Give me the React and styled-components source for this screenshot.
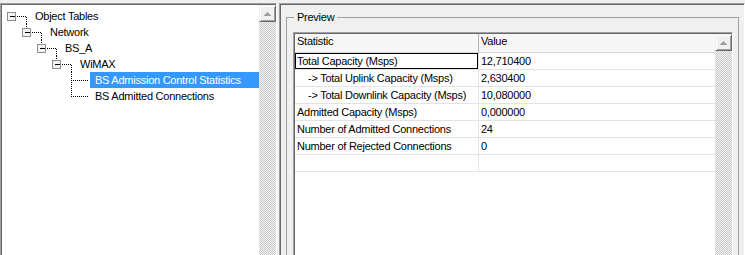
import React from 'react';
import styled, { createGlobalStyle } from 'styled-components';

const GlobalStyle = createGlobalStyle`
  body {
    margin: 0;
    background: #f0f0f0;
  }
`;

const Window = styled.div`
  display: flex;
  gap: 2px;
  width: 745px;
  height: 255px;
  box-sizing: border-box;
  padding-top: 3px;
  overflow: hidden;
  background: #f0f0f0;
  font-family: 'Liberation Sans', Arial, sans-serif;
  font-size: 11px;
  letter-spacing: -0.25px;
  color: #000;
`;

const Pane = styled.div`
  display: flex;
  flex: ${({ $grow }) => ($grow ? 1 : 'none')};
  width: ${({ $width }) => ($width ? `${$width}px` : 'auto')};
  height: 262px;
  box-sizing: border-box;
  border: 1px solid;
  border-color: #a0a0a0 #fff #fff #a0a0a0;
  box-shadow: inset 1px 1px 0 #696969;
  padding: ${({ $pad }) => $pad || '1px 0 0 1px'};
`;

/* tree */

const TreeList = styled.div`
  flex: 1;
  background: #fff;
  padding-top: 3px;
`;

const TreeRow = styled.div`
  display: flex;
  height: 16px;
`;

const Gutter = styled.svg`
  flex: none;
  display: block;
`;

const NodeLabel = styled.span`
  flex: ${({ $selected }) => ($selected ? 1 : 'none')};
  padding-left: 5px;
  line-height: 16px;
  white-space: nowrap;
  background: ${({ $selected }) => ($selected ? '#3399ff' : 'transparent')};
  color: ${({ $selected }) => ($selected ? '#fff' : '#000')};
`;

const dots = { stroke: '#000', strokeWidth: 1, strokeDasharray: '1 1', shapeRendering: 'crispEdges' };

const Branch = ({ level, leaf, last }) => {
  const cx = 9 + level * 15;
  const w = 28 + level * 15;
  return (
    <Gutter width={w} height={16}>
      {leaf ? (
        <>
          <line x1={cx + 0.5} y1={0} x2={cx + 0.5} y2={last ? 9 : 16} style={dots} />
          <line x1={cx + 2} y1={8.5} x2={cx + 18} y2={8.5} style={dots} />
        </>
      ) : (
        <>
          {level > 0 && <line x1={cx + 0.5} y1={0} x2={cx + 0.5} y2={4} style={dots} />}
          <rect x={cx - 3.5} y={4.5} width={8} height={8} fill="#f4f4f4" stroke="#8e8f8f" shapeRendering="crispEdges" />
          <line x1={cx - 1.5} y1={8.5} x2={cx + 3.5} y2={8.5} stroke="#000" shapeRendering="crispEdges" />
          <line x1={cx + 6} y1={8.5} x2={cx + 16} y2={8.5} style={dots} />
          <line x1={cx + 15.5} y1={9} x2={cx + 15.5} y2={16} style={dots} />
        </>
      )}
    </Gutter>
  );
};

/* scrollbars */

const ScrollBar = styled.div`
  display: flex;
  flex-direction: column;
  flex: none;
  width: 17px;
`;

const ScrollButton = styled.div`
  display: flex;
  align-items: center;
  justify-content: center;
  height: 17px;
  box-sizing: border-box;
  background: #f0f0f0;
  border: 1px solid;
  border-color: #f0f0f0 #696969 #696969 #f0f0f0;
  box-shadow: inset 1px 1px 0 #fff, inset -1px -1px 0 #a0a0a0;
`;

const Track = styled.div`
  flex: 1;
  background-color: #f4f4f4;
  background-image: repeating-conic-gradient(#c9c9c9 0% 25%, #f4f4f4 0% 50%);
  background-size: 2px 2px;
`;

const UpArrow = () => (
  <svg width="7" height="4" viewBox="0 0 7 4">
    <path d="M3.5 0 L7 4 L0 4 Z" fill="#a0a0a0" shapeRendering="crispEdges" />
  </svg>
);

const VScroll = () => (
  <ScrollBar>
    <ScrollButton>
      <UpArrow />
    </ScrollButton>
    <Track />
  </ScrollBar>
);

/* preview */

const GroupBox = styled.fieldset`
  width: 453px;
  height: 270px;
  box-sizing: border-box;
  margin: 0;
  padding: 8px 0 0 6px;
  border: 1px solid #a0a0a0;
`;

const Legend = styled.legend`
  margin-left: 1px;
  padding: 0 3px;
  line-height: 14px;
`;

const Grid = styled.div`
  display: flex;
  width: 440px;
  height: 240px;
  box-sizing: border-box;
  border: 1px solid;
  border-color: #a0a0a0 #fff #fff #a0a0a0;
  box-shadow: inset 1px 1px 0 #696969;
  padding: 1px 0 0 1px;
  background: #fff;
`;

const Table = styled.div`
  flex: 1;
  display: flex;
  flex-direction: column;
`;

const HeaderRow = styled.div`
  display: flex;
  height: 19px;
  box-sizing: border-box;
  border-bottom: 1px solid #d5d5d5;
  background: #f7f7f7;
`;

const Row = styled.div`
  display: flex;
  height: 17px;
  box-sizing: border-box;
  border-bottom: 1px solid #e3e3e3;
`;

const Cell = styled.div`
  flex: ${({ $first }) => ($first ? 'none' : 1)};
  width: ${({ $first }) => ($first ? '183px' : 'auto')};
  box-sizing: border-box;
  padding-left: ${({ $indent }) => ($indent ? 13 : 2)}px;
  border-left: ${({ $first, $head }) => ($first ? 'none' : `1px solid ${$head ? '#b4b4b4' : '#e3e3e3'}`)};
  line-height: ${({ $head }) => ($head ? 15 : 16)}px;
  white-space: nowrap;
  box-shadow: ${({ $focus }) => ($focus ? 'inset 0 0 0 1px #000' : 'none')};
`;

const tree = [
  { label: 'Object Tables', level: 0 },
  { label: 'Network', level: 1 },
  { label: 'BS_A', level: 2 },
  { label: 'WiMAX', level: 3 },
  { label: 'BS Admission Control Statistics', level: 4, leaf: true, selected: true },
  { label: 'BS Admitted Connections', level: 4, leaf: true, last: true },
];

const stats = [
  { name: 'Total Capacity (Msps)', value: '12,710400', focus: true },
  { name: '-> Total Uplink Capacity (Msps)', value: '2,630400', indent: true },
  { name: '-> Total Downlink Capacity (Msps)', value: '10,080000', indent: true },
  { name: 'Admitted Capacity (Msps)', value: '0,000000' },
  { name: 'Number of Admitted Connections', value: '24' },
  { name: 'Number of Rejected Connections', value: '0' },
  { name: '', value: '' },
];

const App = () => (
  <>
    <GlobalStyle />
    <Window>
      <Pane $width={277}>
        <TreeList>
          {tree.map(node => (
            <TreeRow key={node.label}>
              <Branch level={node.level} leaf={node.leaf} last={node.last} />
              <NodeLabel $selected={node.selected}>{node.label}</NodeLabel>
            </TreeRow>
          ))}
        </TreeList>
        <VScroll />
      </Pane>
      <Pane $grow $pad="6px 0 0 6px">
        <GroupBox>
          <Legend>Preview</Legend>
          <Grid>
            <Table>
              <HeaderRow>
                <Cell $first $head>Statistic</Cell>
                <Cell $head>Value</Cell>
              </HeaderRow>
              {stats.map((s, i) => (
                <Row key={i}>
                  <Cell $first $indent={s.indent} $focus={s.focus}>{s.name}</Cell>
                  <Cell>{s.value}</Cell>
                </Row>
              ))}
            </Table>
            <VScroll />
          </Grid>
        </GroupBox>
      </Pane>
    </Window>
  </>
);

export default App;
